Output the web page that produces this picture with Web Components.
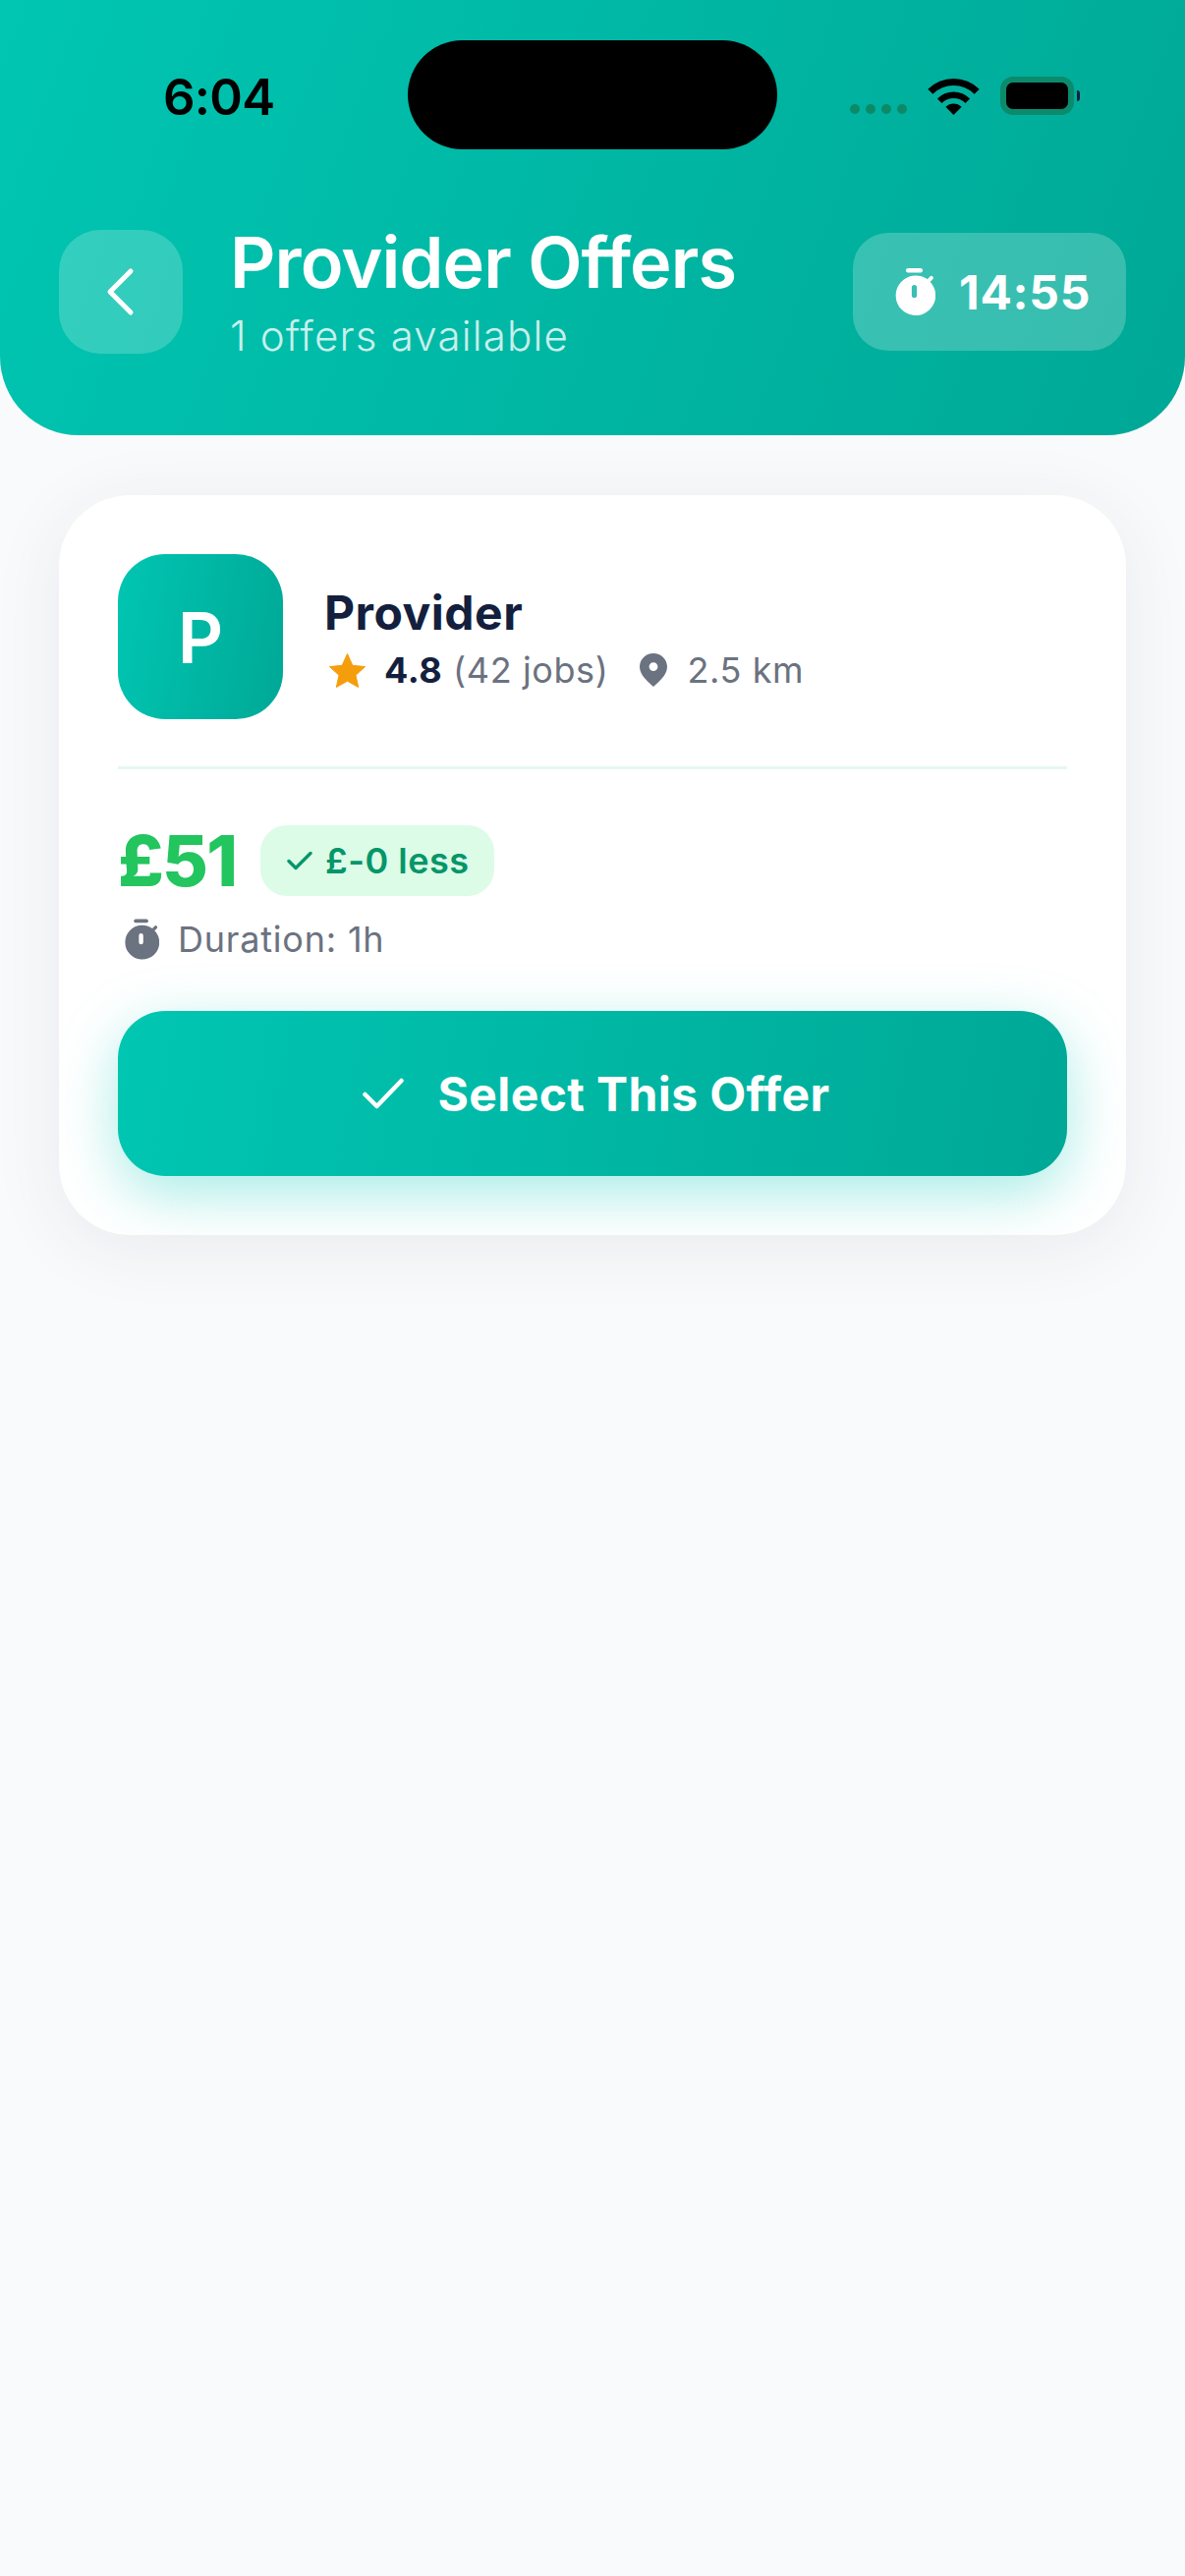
<!DOCTYPE html>
<html>
<head>
<meta charset="utf-8">
<title>Provider Offers</title>
<style>
    html, body { margin: 0; padding: 0; }
    body {
        min-height: 2622px;
        background: #f9fafc;
        font-family: Inter, "Noto Sans", sans-serif;
    }
</style>
</head>
<body>
<offers-screen></offers-screen>

<script>
const STOPWATCH = `
    <svg viewBox="0 0 42 48" width="100%" height="100%" fill="currentColor">
        <rect x="12" y="0" width="17" height="4.5" rx="2.2"/>
        <path fill-rule="evenodd" d="M20.5 7.5a20.3 20.3 0 1 1 0 40.5a20.3 20.3 0 0 1 0-40.5ZM20.5 17a2.6 2.6 0 0 0-2.6 2.6v7.8a2.6 2.6 0 0 0 5.2 0v-7.8a2.6 2.6 0 0 0-2.6-2.6Z"/>
        <path d="M33.5 11.5l3-3a1.9 1.9 0 0 1 2.8 2.7l-3 3Z"/>
    </svg>`;

class StatusBar extends HTMLElement {
    constructor() {
        super();
        this.attachShadow({ mode: 'open' });
        this.shadowRoot.innerHTML = `
            <style>
                :host { display: flex; align-items: flex-start; height: 152px; padding-top: 41px; box-sizing: border-box; }
                .time { width: 415px; box-sizing: border-box; padding: 37px 0 0 166px; font-size: 51px; line-height: 42px; font-weight: 600; letter-spacing: -.8px; color: #000; }
                .island { width: 376px; height: 111px; border-radius: 56px; background: #000; flex: none; }
                .icons { flex: 1; display: flex; align-items: flex-end; padding: 37px 0 0 74px; }
                .dots { display: flex; gap: 6px; margin-bottom: 1px; margin-right: 22px; }
                .dots i { width: 10px; height: 10px; border-radius: 50%; background: #0c8a68; }
                .wifi { width: 51px; height: 37px; margin-right: 22px; display: block; overflow: visible; }
                .batt { width: 75px; height: 39px; box-sizing: border-box; border: 5px solid #0c8a6c; border-radius: 13px; }
                .batt b { display: block; height: 100%; border-radius: 8px; background: #000; border: 1px solid #0c8a6c; box-sizing: border-box; }
                .nub { width: 3px; height: 11px; border-radius: 0 4px 4px 0; background: #141f3e; margin: 0 0 14px 3px; }
            </style>
            <div class="time">6:04</div>
            <div class="island"></div>
            <div class="icons">
                <div class="dots"><i></i><i></i><i></i><i></i></div>
                <svg class="wifi" viewBox="0 0 51 37" fill="#000">
                    <path d="M-.66 10.84A37 37 0 0 1 51.66 10.84L46.7 15.8A30 30 0 0 0 4.3 15.8Z"/>
                    <path d="M8.9 20.4A23.5 23.5 0 0 1 42.1 20.4L37.5 25A17 17 0 0 0 13.5 25Z"/>
                    <path d="M17.37 28.87A11.5 11.5 0 0 1 33.63 28.87L25.5 37Z"/>
                </svg>
                <div class="batt"><b></b></div>
                <div class="nub"></div>
            </div>
        `;
    }
}

class IconButton extends HTMLElement {
    constructor() {
        super();
        this.attachShadow({ mode: 'open' });
        this.shadowRoot.innerHTML = `
            <style>
                :host { display: flex; width: 126px; height: 126px; flex: none; align-items: center; justify-content: center; border-radius: 42px; background: rgba(255,255,255,.2); }
                svg { width: 30px; height: 50px; display: block; }
            </style>
            <svg viewBox="0 0 30 50" fill="none" stroke="#fff" stroke-width="5" stroke-linecap="round" stroke-linejoin="round">
                <path d="M25 4L4 25L25 46"/>
            </svg>
        `;
    }
}

class TimerPill extends HTMLElement {
    constructor() {
        super();
        this.attachShadow({ mode: 'open' });
        this.shadowRoot.innerHTML = `
            <style>
                :host { display: flex; width: 278px; height: 120px; flex: none; box-sizing: border-box; padding: 0 0 0 42px; gap: 24px; align-items: center; border-radius: 36px; background: rgba(255,255,255,.22); color: #fff; font-size: 48px; font-weight: 700; letter-spacing: .7px; }
                .ic { width: 42px; height: 48px; }
            </style>
            <span class="ic">${STOPWATCH}</span>
            <slot></slot>
        `;
    }
}

class AppHeader extends HTMLElement {
    constructor() {
        super();
        this.attachShadow({ mode: 'open' });
        this.shadowRoot.innerHTML = `
            <style>
                :host { display: block; height: 443px; box-sizing: border-box; background: linear-gradient(110deg, #00c6b2, #00a896); border-radius: 0 0 80px 80px; }
                .row { display: flex; align-items: center; padding: 70px 60px 0; }
                .titles { flex: 1; min-width: 0; padding-left: 48px; }
                h1 { margin: 0; font-size: 72px; line-height: 90px; font-weight: 600; letter-spacing: -.9px; color: #fff; }
                p { margin: 0; font-size: 42px; line-height: 60px; font-weight: 300; letter-spacing: 1.2px; color: rgba(255,255,255,.8); }
            </style>
            <status-bar></status-bar>
            <div class="row">
                <icon-button></icon-button>
                <div class="titles">
                    <h1><slot name="title"></slot></h1>
                    <p><slot name="sub"></slot></p>
                </div>
                <timer-pill><slot name="timer"></slot></timer-pill>
            </div>
        `;
    }
}

class OfferCard extends HTMLElement {
    constructor() {
        super();
        this.attachShadow({ mode: 'open' });
        this.shadowRoot.innerHTML = `
            <style>
                :host { display: block; margin: 61px 60px 0; padding: 60px; border-radius: 72px; background: #fff; box-shadow: 0 12px 72px rgba(20,50,70,.08); color: #6b7280; overflow: hidden; }
                .top { display: flex; align-items: center; gap: 42px; padding-bottom: 48px; border-bottom: 3px solid #e6f7f5; }
                .avatar { width: 168px; height: 168px; flex: none; display: flex; align-items: center; justify-content: center; border-radius: 48px; background: linear-gradient(100deg, #00c6b2, #00a896); color: #fff; font-size: 72px; font-weight: 600; }
                .who { padding-top: 3px; }
                .name { font-size: 48px; line-height: 58px; font-weight: 700; color: #141f3e; letter-spacing: .5px; }
                .meta { display: flex; align-items: center; font-size: 36px; line-height: 44px; letter-spacing: .6px; margin-top: 7px; padding-left: 5px; }
                .meta svg { display: block; flex: none; }
                .meta strong { font-weight: 700; color: #141f3e; margin: 0 11px 0 19px; letter-spacing: .5px; }
                .pin { margin: 0 20px 0 32px; }
                .price { display: flex; align-items: center; gap: 25px; margin-top: 57px; }
                .amount { font-size: 72px; line-height: 72px; font-weight: 800; letter-spacing: -1.8px; color: #22c55e; }
                .badge { display: flex; align-items: center; gap: 13px; height: 72px; padding: 0 25px 0 27px; border-radius: 27px; background: #dcfce7; color: #059669; font-size: 36px; font-weight: 600; letter-spacing: .5px; }
                .duration { display: flex; align-items: center; gap: 19px; margin-top: 23px; padding-left: 6px; font-size: 36px; line-height: 42px; letter-spacing: .8px; }
                .duration .ic { width: 36px; height: 42px; }
                .cta { display: flex; align-items: center; justify-content: center; gap: 34px; height: 168px; margin-top: 52px; padding-left: 8px; border-radius: 48px; background: linear-gradient(100deg, #00c6b2, #00a896); box-shadow: 0 18px 60px rgba(0,201,183,.35); color: #fff; font-size: 48px; font-weight: 700; letter-spacing: .4px; }
            </style>
            <div class="top">
                <div class="avatar">P</div>
                <div class="who">
                    <div class="name">Provider</div>
                    <div class="meta">
                        <svg width="37" height="35" viewBox="0 0 37 35" fill="#f59e0b"><path d="M18.5 0.5L23.8 12.3L36.5 13.6L27 22.3L29.7 34.5L18.5 28.2L7.3 34.5L10 22.3L0.5 13.6L13.2 12.3Z" stroke="#f59e0b" stroke-linejoin="round"/></svg>
                        <strong>4.8</strong>
                        <span>(42 jobs)</span>
                        <svg class="pin" width="28" height="34" viewBox="0 0 28 34" fill="#6b7280"><path fill-rule="evenodd" d="M14 0C6.3 0 0 6.1 0 13.7C0 22.5 9.5 29.7 14 34C18.5 29.7 28 22.5 28 13.7C28 6.1 21.7 0 14 0ZM14 9.2a4.4 4.4 0 1 1 0 8.8a4.4 4.4 0 0 1 0-8.8Z"/></svg>
                        <span>2.5 km</span>
                    </div>
                </div>
            </div>
            <div class="price">
                <div class="amount">£51</div>
                <div class="badge">
                    <svg width="26" height="20" viewBox="0 0 26 20" fill="none" stroke="#059669" stroke-width="3.4" stroke-linecap="round" stroke-linejoin="round"><path d="M2 10.5L9 17.5L24 2.5"/></svg>
                    <span>£-0 less</span>
                </div>
            </div>
            <div class="duration"><span class="ic">${STOPWATCH}</span><span>Duration: 1h</span></div>
            <div class="cta">
                <svg width="42" height="32" viewBox="0 0 42 32" fill="none" stroke="#fff" stroke-width="4.5" stroke-linecap="round" stroke-linejoin="round"><path d="M2.5 17L14.5 29L39.5 3"/></svg>
                <span>Select This Offer</span>
            </div>
        `;
    }
}

class OffersScreen extends HTMLElement {
    constructor() {
        super();
        this.attachShadow({ mode: 'open' });
        this.shadowRoot.innerHTML = `
            <style>
                :host { display: block; }
            </style>
            <app-header>
                <span slot="title">Provider Offers</span>
                <span slot="sub">1 offers available</span>
                <span slot="timer">14:55</span>
            </app-header>
            <offer-card></offer-card>
        `;
    }
}

customElements.define('status-bar', StatusBar);
customElements.define('icon-button', IconButton);
customElements.define('timer-pill', TimerPill);
customElements.define('app-header', AppHeader);
customElements.define('offer-card', OfferCard);
customElements.define('offers-screen', OffersScreen);
</script>
</body>
</html>
